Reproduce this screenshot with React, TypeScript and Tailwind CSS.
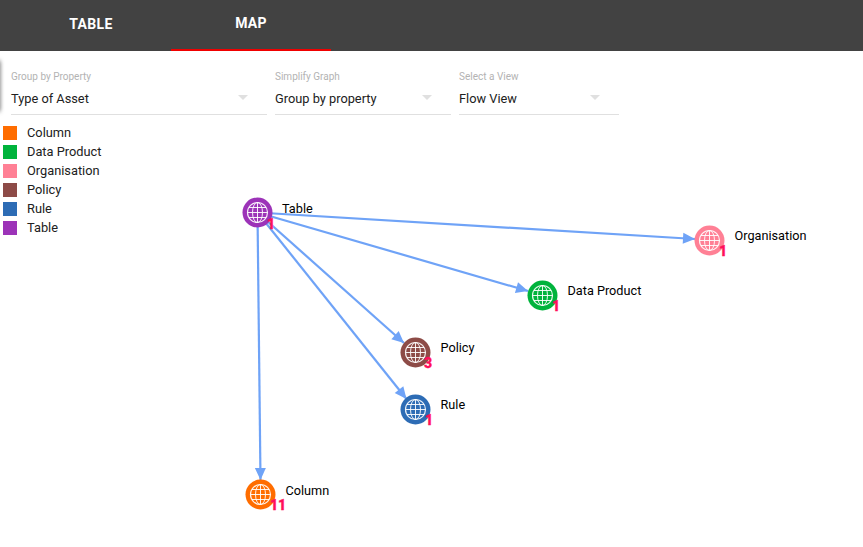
import React from "react";

const legend = [
  ["Column", "bg-[#ff6d00]"],
  ["Data Product", "bg-[#00b33c]"],
  ["Organisation", "bg-[#ff8095]"],
  ["Policy", "bg-[#8d4b47]"],
  ["Rule", "bg-[#2d6cb5]"],
  ["Table", "bg-[#9c33b8]"],
];

const nodes = [
  { label: "Table", x: 257.5, y: 212.5, c: "#9c33b8", n: "1", lx: 282, ly: 213, bx: 268, by: 217 },
  { label: "Organisation", x: 709.5, y: 240.5, c: "#ff8095", n: "1", lx: 734.5, ly: 240, bx: 720, by: 244 },
  { label: "Data Product", x: 542.5, y: 295.5, c: "#00b33c", n: "1", lx: 567.5, ly: 295, bx: 553, by: 299 },
  { label: "Policy", x: 415.5, y: 352.5, c: "#8d4b47", n: "3", lx: 440.5, ly: 352, bx: 425, by: 356 },
  { label: "Rule", x: 415.5, y: 409.5, c: "#2d6cb5", n: "1", lx: 440.5, ly: 409, bx: 426, by: 413 },
  { label: "Column", x: 260.5, y: 494.5, c: "#ff6d00", n: "11", lx: 285.5, ly: 495, bx: 271, by: 498 },
];

const edges: [number, number, number, number][] = [
  [257.5, 212.5, 695, 239],
  [257.5, 212.5, 528, 291],
  [257.5, 212.5, 404, 343],
  [257.5, 212.5, 406.5, 399],
  [257.5, 212.5, 260.5, 480],
];

function arrowHead(x0: number, y0: number, x: number, y: number) {
  const a = Math.atan2(y - y0, x - x0);
  const l = 12;
  const w = 5.5;
  const bx = x - l * Math.cos(a);
  const by = y - l * Math.sin(a);
  const nx = -Math.sin(a) * w;
  const ny = Math.cos(a) * w;
  return `${x},${y} ${bx + nx},${by + ny} ${bx - nx},${by - ny}`;
}

function Select({ label, value, width, arrow }: { label: string; value: string; width: string; arrow: string }) {
  return (
    <div className={`${width} h-[64px] border-b border-[#e0e0e0] relative`}>
      <div className="text-[10px] leading-[12px] text-[#b3b3b3] pt-[20px]">{label}</div>
      <div className="text-[12.8px] leading-[16px] text-[#212121] mt-[8px]">{value}</div>
      <div className={`absolute top-[44px] ${arrow} w-0 h-0 border-x-[5px] border-x-transparent border-t-[5px] border-t-[#e0e0e0]`} />
    </div>
  );
}

export default function App() {
  return (
    <div className="relative w-[863px] h-[547px] bg-white overflow-hidden font-['Roboto',sans-serif]">
      <div className="h-[51px] bg-[#424242] flex pl-[11px]">
        <div className="w-[160px] h-[51px] flex items-center justify-center text-white text-[14px] tracking-[0.4px] font-bold pb-[3px]">TABLE</div>
        <div className="w-[160px] h-[51px] flex items-center justify-center text-white text-[14px] tracking-[0.2px] font-bold pb-[3px] border-b-2 border-[#f00000]">MAP</div>
      </div>
      <div className="flex gap-2 pl-[11px] h-[64px]">
        <Select label="Group by Property" value="Type of Asset" width="w-[256px]" arrow="left-[227px]" />
        <Select label="Simplify Graph" value="Group by property" width="w-[176px]" arrow="left-[147px]" />
        <Select label="Select a View" value="Flow View" width="w-[160px]" arrow="left-[131px]" />
      </div>
      <div className="absolute -left-[3px] top-[60px] w-[3px] h-[52px] bg-[#555] rounded-r shadow-[0_0_4px_rgba(0,0,0,0.7)]" />
      <div className="pl-[3px] pt-[8px] flex flex-col">
        {legend.map(([name, color]) => (
          <div key={name} className="h-[19px] flex items-center gap-[10px]">
            <div className={`w-[14px] h-[14px] ${color}`} />
            <span className="text-[12.8px] text-[#212121] leading-[19px]">{name}</span>
          </div>
        ))}
      </div>

      <svg className="absolute left-0 top-0" width="863" height="547" viewBox="0 0 863 547">
        {edges.map(([a, b, c, d], i) => (
          <g key={i}>
            <line x1={a} y1={b} x2={c} y2={d} stroke="#6fa3f7" strokeWidth="2.2" />
            <polygon points={arrowHead(a, b, c, d)} fill="#6fa3f7" />
          </g>
        ))}
        {nodes.map((n) => (
          <g key={n.label}>
            <circle cx={n.x} cy={n.y} r="15" fill={n.c} />
            <g fill="none" stroke="#fff" strokeWidth="1" strokeOpacity="0.9">
              <circle cx={n.x} cy={n.y} r="10" strokeWidth="1.2" />
              <ellipse cx={n.x} cy={n.y} rx="5" ry="10" />
              <line x1={n.x} y1={n.y - 10} x2={n.x} y2={n.y + 10} />
              <line x1={n.x - 10} y1={n.y} x2={n.x + 10} y2={n.y} />
              <line x1={n.x - 8.5} y1={n.y - 5} x2={n.x + 8.5} y2={n.y - 5} />
              <line x1={n.x - 8.5} y1={n.y + 5} x2={n.x + 8.5} y2={n.y + 5} />
            </g>
          </g>
        ))}
      </svg>
      {nodes.map((n) => (
        <React.Fragment key={n.label}>
          <span
            className="absolute text-[12.7px] leading-[14px] text-black whitespace-nowrap"
            style={{ left: n.lx, top: n.ly - 11 }}
          >
            {n.label}
          </span>
          <span
            className="absolute text-[14px] leading-[14px] font-black text-[#ff0f5a] [-webkit-text-stroke:0.3px_#ff0f5a] whitespace-nowrap"
            style={{ left: n.bx - 1, top: n.by }}
          >
            {n.n}
          </span>
        </React.Fragment>
      ))}
    </div>
  );
}
